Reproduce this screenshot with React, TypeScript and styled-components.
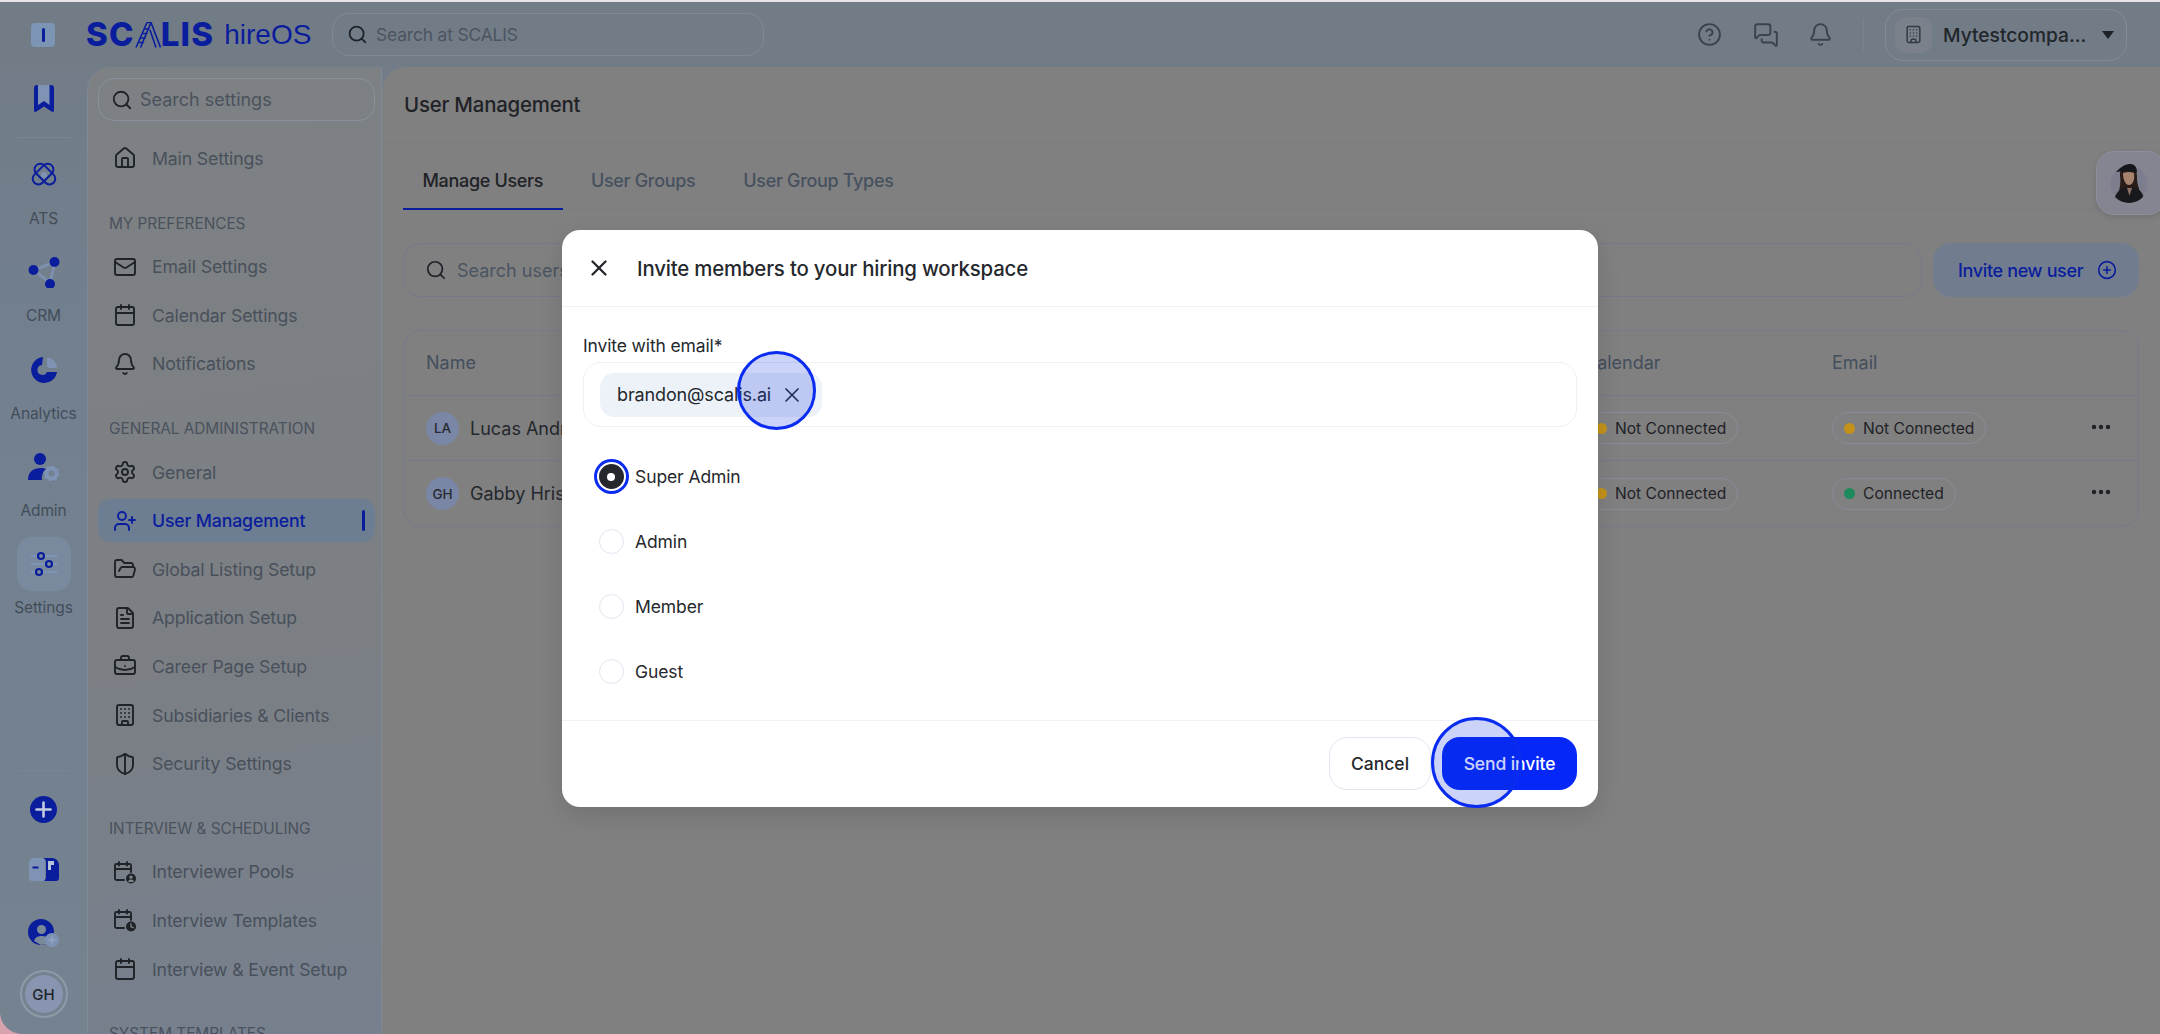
import React from 'react';
import styled, { createGlobalStyle } from 'styled-components';
import {
  Search, House, Mail, Calendar, Bell, Settings, UserPlus, FolderOpen, FileText,
  BriefcaseBusiness, Building, ShieldHalf, X, CirclePlus, CircleHelp, MessagesSquare, Ellipsis,
} from 'lucide-react';

const DEEP = '#0a1d9c';
const SOFT = '#7f93b4';

const Global = createGlobalStyle`
  html, body { margin: 0; padding: 0; width: 2160px; height: 1034px; overflow: hidden; }
  body { background: linear-gradient(180deg, #e9e2e8 0%, #e2c4cc 60%, #d7a2ae 100%); font-family: "Inter", "Noto Sans", sans-serif; }
  * { box-sizing: border-box; }
`;

const Frame = styled.div`
  position: relative;
  margin-top: 2px;
  height: 1032px;
  width: 2160px;
  display: grid;
  grid-template-rows: 65px 1fr;
  grid-template-columns: 87px 295px 1fr;
  background: linear-gradient(180deg, #727c87 0%, #728090 40%, #75828f 100%);
  border-bottom-left-radius: 22px;
  overflow: hidden;
`;

/* ---------- top bar ---------- */
const TopBar = styled.header`
  grid-column: 1 / -1;
  display: flex;
  align-items: center;
  padding-left: 31px;
  padding-right: 33px;
  background: #727c87;
`;
const ToggleBox = styled.div`
  width: 24px;
  height: 24px;
  border-radius: 4px;
  background: #7d95b5;
  display: flex;
  align-items: center;
  justify-content: center;
  &::after { content: ''; width: 3px; height: 14px; border-radius: 2px; background: ${DEEP}; }
`;
const Logo = styled.div`
  margin-left: 31px;
  display: flex;
  align-items: center;
  color: ${DEEP};
  line-height: 1;
  width: 246px;
`;
const LogoWord = styled.span`
  font-family: "Inter", sans-serif;
  font-weight: 800;
  font-size: 33px;
  letter-spacing: 1.2px;
`;
const LogoProduct = styled.span`
  margin-left: 10px;
  font-family: "Liberation Sans", sans-serif;
  font-weight: 400;
  font-size: 28px;
`;
const GlobalSearch = styled.div`
  width: 432px;
  height: 43px;
  border: 1px solid #808a96;
  border-radius: 17px;
  display: flex;
  align-items: center;
  gap: 8px;
  padding-left: 14px;
  color: #4c555f;
  font-size: 17.5px;
  letter-spacing: -0.2px;
  & svg { color: #1f2328; }
`;
const TopRight = styled.div`
  margin-left: auto;
  display: flex;
  align-items: center;
  color: #3b424c;
`;
const TopIcon = styled.div`
  display: flex;
  width: 26px;
  justify-content: center;
  margin-right: ${p => p.$mr}px;
`;
const TopDivider = styled.div`
  width: 1px;
  height: 32px;
  background: #79838f;
  margin-right: 21px;
`;
const CompanyBox = styled.div`
  width: 242px;
  height: 52px;
  border: 1px solid #828c98;
  border-radius: 18px;
  display: flex;
  align-items: center;
  padding-left: 9px;
  color: #22262b;
  font-size: 19.2px;
  font-weight: 500;
`;
const CompanyIcon = styled.div`
  width: 37px;
  height: 36px;
  border-radius: 10px;
  background: #7a818a;
  display: flex;
  align-items: center;
  justify-content: center;
  margin-right: 11px;
  color: #333a43;
`;
const Caret = styled.span`
  margin-left: 16px;
  width: 0;
  height: 0;
  border-left: 6.5px solid transparent;
  border-right: 6.5px solid transparent;
  border-top: 8px solid #1e2126;
`;

/* ---------- rail ---------- */
const Rail = styled.nav`
  display: flex;
  flex-direction: column;
  align-items: center;
  padding-top: 18px;
  padding-bottom: 16px;
`;
const RailDivider = styled.div`
  width: 54px;
  height: 1px;
  background: #788796;
  flex: none;
  margin: ${p => p.$m};
`;
const RailItems = styled.div`
  display: flex;
  flex-direction: column;
  gap: 16.3px;
`;
const RailItem = styled.div`
  display: flex;
  flex-direction: column;
  align-items: center;
  width: 87px;
`;
const RailIconBox = styled.div`
  width: 54px;
  height: 54px;
  border-radius: 15px;
  display: flex;
  align-items: center;
  justify-content: center;
  background: ${p => (p.$active ? '#798a9e' : 'transparent')};
`;
const RailLabel = styled.div`
  margin-top: 7px;
  height: 20px;
  line-height: 20px;
  font-size: 15.5px;
  color: #434d58;
  letter-spacing: -0.1px;
`;
const RailBottomIcon = styled.div`
  height: ${p => p.$h}px;
  flex: none;
  display: flex;
  align-items: center;
  justify-content: center;
`;
const Avatar = styled.div`
  margin-top: 3px;
  width: 48px;
  height: 48px;
  flex: none;
  border-radius: 50%;
  border: 2px solid #8f9aa9;
  display: flex;
  align-items: center;
  justify-content: center;
`;
const AvatarInner = styled.div`
  width: 38px;
  height: 38px;
  border-radius: 50%;
  background: #8894b0;
  color: #20242a;
  font-size: 15px;
  font-weight: 500;
  display: flex;
  align-items: center;
  justify-content: center;
`;

/* ---------- settings sidebar ---------- */
const Sidebar = styled.aside`
  background: linear-gradient(172deg, #7e8184 0%, #7c7f83 55%, #76808e 100%);
  border-top-left-radius: 24px;
  border-left: 1px solid #7f8a97;
  border-right: 1px solid #7f8a99;
  padding: 11px 6px 0 10px;
  overflow: hidden;
  height: 967px;
`;
const SideSearch = styled.div`
  height: 43px;
  border: 1px solid #88919c;
  border-radius: 16px;
  display: flex;
  align-items: center;
  padding-left: 12px;
  gap: 7px;
  color: #4a525d;
  font-size: 18px;
  margin-bottom: 13px;
  & svg { color: #1f2328; }
`;
const Group = styled.div`
  margin-top: 31px;
`;
const GroupTitle = styled.div`
  height: 20px;
  line-height: 20px;
  margin-bottom: 8.7px;
  padding-left: 11px;
  font-size: 15.4px;
  color: #4a525d;
  white-space: nowrap;
  letter-spacing: -0.05px;
`;
const NavRow = styled.div`
  position: relative;
  height: 48.6px;
  display: flex;
  align-items: center;
  padding-left: 15px;
  gap: 15px;
  font-size: 17.7px;
  letter-spacing: -0.15px;
  color: #48505b;
  & > svg { color: #1f2328; flex: none; }
`;
const ActiveRow = styled(NavRow)`
  height: 43px;
  margin: 2.8px 0;
  background: #6d7d92;
  border-radius: 13px;
  color: ${DEEP};
  font-weight: 500;
  & > svg { color: ${DEEP}; }
  &::after {
    content: '';
    position: absolute;
    right: 10px;
    top: 11px;
    width: 3px;
    height: 21px;
    border-radius: 2px;
    background: ${DEEP};
  }
`;

/* ---------- main ---------- */
const Main = styled.main`
  background: #808080;
  border-top-left-radius: 24px;
  height: 967px;
  overflow: hidden;
`;
const TitleBar = styled.div`
  height: 76px;
  padding-left: 22px;
  display: flex;
  align-items: center;
  border-bottom: 1px solid #797c80;
  font-size: 20.4px;
  font-weight: 450;
  letter-spacing: -0.2px;
  color: #1f2227;
`;
const TabBar = styled.div`
  height: 67px;
  margin-left: 21px;
  display: flex;
  gap: 9px;
  border-bottom: 1px solid #787c84;
`;
const Tab = styled.div`
  height: 67px;
  padding: 9px 19.5px 0;
  display: flex;
  align-items: center;
  font-size: 18px;
  letter-spacing: -0.33px;
  font-weight: ${p => (p.$active ? 500 : 450)};
  color: ${p => (p.$active ? '#1f2227' : '#46515f')};
  border-bottom: ${p => (p.$active ? `2px solid ${DEEP}` : '2px solid transparent')};
`;
const SearchRow = styled.div`
  margin: 33px 21px 0;
  display: flex;
  gap: 11px;
  height: 54px;
`;
const UserSearch = styled.div`
  flex: 1;
  border: 1px solid #747a8a;
  border-radius: 18px;
  display: flex;
  align-items: center;
  padding-left: 21px;
  gap: 10px;
  color: #4a5562;
  font-size: 18px;
  & svg { color: #1f2328; }
`;
const InviteButton = styled.div`
  width: 206px;
  background: #717d8f;
  border-radius: 18px;
  display: flex;
  align-items: center;
  padding-left: 25px;
  gap: 14px;
  color: ${DEEP};
  font-size: 18px;
  font-weight: 500;
  letter-spacing: -0.35px;
`;
const Table = styled.div`
  margin: 33px 21px 0;
  border: 1px solid #757a8d;
  border-radius: 18px;
`;
const TableRow = styled.div`
  display: grid;
  grid-template-columns: 1fr 248px 249px 57px;
  align-items: center;
  height: 65px;
  padding-left: 22px;
  padding-bottom: ${p => (p.$head ? 2 : 0)}px;
  border-bottom: ${p => (p.$last ? 'none' : '1px solid #767a88')};
`;
const HeadCell = styled.div`
  font-size: 18px;
  color: #434e5c;
`;
const NameCell = styled.div`
  display: flex;
  align-items: center;
  gap: 11px;
  font-size: 18px;
  color: #24282e;
`;
const Initials = styled.div`
  width: 33px;
  height: 33px;
  border-radius: 50%;
  background: #7a86a5;
  color: #262a31;
  font-size: 13.5px;
  font-weight: 500;
  display: flex;
  align-items: center;
  justify-content: center;
`;
const Pill = styled.div`
  height: 32px;
  width: fit-content;
  border: 1px solid #858b97;
  border-radius: 16px;
  display: flex;
  align-items: center;
  gap: 6px;
  padding: 0 11px;
  font-size: 15.6px;
  color: #1f2227;
`;
const Dot = styled.span`
  width: 11px;
  height: 11px;
  border-radius: 50%;
  background: ${p => (p.$ok ? '#1d8a5c' : '#c4921a')};
  margin-right: 2px;
`;
const Dots = styled.div`
  display: flex;
  padding-left: 8px;
  margin-top: -3px;
  color: #1e2126;
`;
const Floater = styled.div`
  position: absolute;
  left: 2096px;
  top: 149px;
  width: 70px;
  height: 64px;
  background: #848591;
  border: 1px solid #8d8f9d;
  border-radius: 18px;
  box-shadow: 0 2px 6px rgba(0,0,0,.12);
  padding: 12px 0 0 13px;
`;

/* ---------- modal ---------- */
const Backdrop = styled.div`
  position: absolute;
  inset: 0;
  padding-top: 1px;
  display: flex;
  align-items: center;
  justify-content: center;
`;
const Modal = styled.section`
  position: relative;
  width: 1036px;
  height: 577px;
  background: #fff;
  border-radius: 18px;
  box-shadow: 0 8px 24px rgba(0,0,0,.12);
  color: #25282d;
`;
const ModalHead = styled.div`
  height: 77px;
  display: flex;
  align-items: center;
  gap: 25px;
  padding-left: 24px;
  border-bottom: 1px solid #eef2f8;
  font-size: 20.4px;
  font-weight: 450;
  letter-spacing: -0.18px;
`;
const ModalBody = styled.div`
  padding: 28px 21px 0;
  height: 414px;
  border-bottom: 1px solid #eef2f8;
`;
const FieldLabel = styled.div`
  height: 22px;
  line-height: 22px;
  font-size: 17.5px;
  letter-spacing: -0.13px;
`;
const EmailField = styled.div`
  margin-top: 5px;
  height: 65px;
  border: 1px solid #eef1f7;
  border-radius: 18px;
  display: flex;
  align-items: center;
  padding-left: 16px;
`;
const Chip = styled.div`
  height: 44px;
  border-radius: 14px;
  background: #edf2f9;
  display: flex;
  align-items: center;
  padding: 0 18px 0 17px;
  gap: 9px;
  font-size: 18px;
  letter-spacing: -0.13px;
  & svg { color: #2b2f36; }
`;
const RadioList = styled.div`
  margin-top: 17.6px;
`;
const RadioRow = styled.div`
  height: 64.7px;
  padding-left: 15.5px;
  display: flex;
  align-items: center;
  gap: 11.5px;
  font-size: 17.5px;
  letter-spacing: -0.1px;
`;
const Radio = styled.span`
  position: relative;
  width: 25px;
  height: 25px;
  border-radius: 50%;
  border: ${p => (p.$on ? 'none' : '1px solid #dfe6ef')};
  background: ${p => (p.$on ? '#25282d' : '#fff')};
  box-shadow: ${p => (p.$on ? '0 0 0 2px #fff, 0 0 0 5px #0a2bf0' : 'none')};
  display: flex;
  align-items: center;
  justify-content: center;
  &::after {
    content: '';
    display: ${p => (p.$on ? 'block' : 'none')};
    width: 8px;
    height: 8px;
    border-radius: 50%;
    background: #fff;
  }
`;
const ModalFoot = styled.div`
  height: 86px;
  display: flex;
  align-items: center;
  justify-content: flex-end;
  gap: 11px;
  padding: 0 21px 1px 0;
`;
const Cancel = styled.div`
  width: 102px;
  height: 53px;
  border: 1px solid #dfe6ef;
  border-radius: 18px;
  display: flex;
  align-items: center;
  justify-content: center;
  font-size: 17.5px;
  font-weight: 450;
`;
const Send = styled.div`
  width: 135px;
  height: 53px;
  border-radius: 18px;
  background: #0527f7;
  color: #fff;
  display: flex;
  align-items: center;
  justify-content: center;
  font-size: 17.5px;
  font-weight: 450;
  letter-spacing: -0.1px;
`;
const ClickMark = styled.div`
  position: absolute;
  left: ${p => p.$x}px;
  top: ${p => p.$y}px;
  width: ${p => p.$d}px;
  height: ${p => p.$d}px;
  border-radius: 50%;
  border: 3px solid #0a2bf0;
  background: rgba(20, 55, 225, 0.22);
`;

/* ---------- drawn icons ---------- */
const LadderA = () => (
  <svg width="26" height="26" viewBox="0 0 26 26" fill="none" stroke={DEEP} strokeWidth="1.6" role="img" aria-label="A">
    <path d="M12 0.5 L1 25.5 M16 0.5 L5.5 25.5" />
    <path d="M12 0.5 H16 L25.5 25.5 M15 8 L21 25.5" />
    <path d="M9.5 7 H14.5 M7.5 11.5 H12.5 M5.5 16 H10.5 M3.5 20.5 H8.5" />
  </svg>
);
const BookmarkMark = () => (
  <svg width="20" height="27" viewBox="0 0 20 27" fill="none">
    <path d="M3 0 H17 A3 3 0 0 1 20 3 V25.5 C20 27 19 27.3 17.5 26.5 L10 21.5 L2.5 26.5 C1 27.3 0 27 0 25.5 V3 A3 3 0 0 1 3 0 Z" fill={DEEP} />
    <path d="M4 0 H15.5 V20 L10 16 L4 20 Z" fill={SOFT} />
  </svg>
);
const AtomIcon = () => (
  <svg width="28" height="28" viewBox="0 0 28 28" fill="none" stroke={DEEP} strokeWidth="2.4">
    <circle cx="14" cy="14" r="3" fill={SOFT} stroke="none" />
    <rect x="-1" y="7" width="30" height="14" rx="7" transform="rotate(45 14 14) translate(2.5 1.2) scale(.82)" />
    <rect x="-1" y="7" width="30" height="14" rx="7" transform="rotate(-45 14 14) translate(2.5 1.2) scale(.82)" />
  </svg>
);
const CrmIcon = () => (
  <svg width="32" height="32" viewBox="0 0 32 32" fill="none">
    <path d="M6 14 L27 6 L22 27 Z" stroke={SOFT} strokeWidth="3" strokeLinejoin="round" opacity=".8" />
    <circle cx="5.5" cy="14" r="5" fill={DEEP} />
    <circle cx="26.5" cy="6" r="5" fill={DEEP} />
    <circle cx="22" cy="28" r="5" fill={DEEP} />
  </svg>
);
const PieIcon = () => (
  <svg width="28" height="28" viewBox="0 0 28 28">
    <path d="M13 1 A13 13 0 1 0 27 16 H17 A5 5 0 1 1 12 9 Z" fill={DEEP} />
    <path d="M17 1.5 A11 11 0 0 1 27 12 H18.5 A5 5 0 0 0 17 10 Z" fill={SOFT} />
  </svg>
);
const AdminIcon = () => (
  <svg width="31" height="28" viewBox="0 0 31 28">
    <circle cx="12" cy="6" r="6" fill={DEEP} />
    <path d="M0 27 C0 19 5 15 13 15 C15 15 17 15.5 18 16 C14.5 19 13.5 23 14 27 Z" fill={DEEP} />
    <circle cx="23.5" cy="20.5" r="5" fill="none" stroke={SOFT} strokeWidth="4" />
    <circle cx="23.5" cy="20.5" r="7" fill="none" stroke={SOFT} strokeWidth="2" strokeDasharray="2.6 2.9" />
  </svg>
);
const SlidersIcon = () => (
  <svg width="28" height="26" viewBox="0 0 28 26" fill="none">
    <path d="M1 5 H27 M1 13 H27 M1 21 H27" stroke={SOFT} strokeWidth="2" />
    <circle cx="11" cy="5" r="3" fill="#798a9e" stroke={DEEP} strokeWidth="2.2" />
    <circle cx="19" cy="13" r="3" fill="#798a9e" stroke={DEEP} strokeWidth="2.2" />
    <circle cx="9" cy="21" r="3" fill="#798a9e" stroke={DEEP} strokeWidth="2.2" />
  </svg>
);
const PlusDisc = () => (
  <svg width="27" height="27" viewBox="0 0 27 27">
    <circle cx="13.5" cy="13.5" r="13.5" fill={DEEP} />
    <path d="M13.5 6.5 V20.5 M6.5 13.5 H20.5" stroke="#c3cde2" strokeWidth="2.6" strokeLinecap="round" />
  </svg>
);
const MailboxIcon = () => (
  <svg width="30" height="23" viewBox="0 0 30 23">
    <path d="M5 0 H16 V23 H3 A3 3 0 0 1 0 20 V5 A5 5 0 0 1 5 0 Z" fill={SOFT} />
    <path d="M14 0 H23 A7 7 0 0 1 30 7 V20 A3 3 0 0 1 27 23 H15 C17 21 17 20 17 18 V4 C17 2 16 1 14 0 Z" fill={DEEP} />
    <path d="M3.5 9.5 H9.5" stroke={DEEP} strokeWidth="2" />
    <path d="M19 3 H25 V7 H22 V12 H19 Z" fill="#b7c3da" />
  </svg>
);
const UserAddIcon = () => (
  <svg width="31" height="28" viewBox="0 0 31 28">
    <circle cx="13" cy="13" r="13" fill={DEEP} />
    <circle cx="13.5" cy="10.5" r="4.5" fill="#7a8999" />
    <path d="M6 22 C7 18 10 17 14 17 C17 17 20 18 21 20 L19 25 L13 26 Z" fill="#7a8999" />
    <circle cx="24" cy="21" r="7" fill="#7d92b3" />
    <path d="M24 17.5 V24.5 M20.5 21 H27.5" stroke="#93a5c2" strokeWidth="1.6" />
  </svg>
);
const PoolIcon = ({ clock }: { clock?: boolean }) => (
  <svg width="24" height="24" viewBox="0 0 24 24" fill="none" stroke="#1f2328" strokeWidth="1.9" strokeLinecap="round" style={{ flex: 'none' }}>
    <path d="M11 20 H3.5 A1.5 1.5 0 0 1 2 18.5 V5.5 A1.5 1.5 0 0 1 3.5 4 H16.5 A1.5 1.5 0 0 1 18 5.5 V12" />
    <path d="M6 2 V5.5 M14 2 V5.5 M2 9 H18" />
    <circle cx="18" cy="18.5" r="5" fill="#1f2328" stroke="none" />
    {clock
      ? <path d="M18 15.8 V18.7 L20.2 19.6" stroke="#80858a" strokeWidth="1.3" />
      : <g stroke="none" fill="#80858a"><circle cx="18" cy="17.2" r="1.6" /><path d="M15.2 22 C15.4 20 16.5 19.4 18 19.4 C19.5 19.4 20.6 20 20.8 22 Z" /></g>}
  </svg>
);
const WomanPhoto = () => (
  <svg width="38" height="40" viewBox="0 0 38 40">
    <defs>
      <clipPath id="womanClip"><path d="M0 0 H38 V20 A19 19 0 0 1 0 20 Z" /></clipPath>
    </defs>
    <circle cx="19" cy="20" r="18.5" fill="#7c7e8e" />
    <g clipPath="url(#womanClip)">
      <path d="M10 11 C10 3 14 1 19 1 C25 1 27 6 27 13 C27 20 29 24 30 28 L8 30 C10 24 11 18 10 11 Z" fill="#2a1d19" />
      <path d="M6 8 C10 4 13 1 19 0 C25 -0.5 27 4 27 8 C20 6.5 13 7 6 8 Z" fill="#14171b" />
      <path d="M13 9 C17 7.5 21 7.5 24 9 C25 15 23 21 19 21 C15 21 13 15 13 9 Z" fill="#a5836f" />
      <path d="M4 40 C4 29 10 24 17 24 H22 C29 24 33 28 34 36 C30 40 26 41 19 41 C12 41 8 41 4 40 Z" fill="#17191c" />
      <path d="M17 24 L19.5 32 L22 24 Z" fill="#8b6f60" />
    </g>
  </svg>
);

const icon = (C: any, size = 24, sw = 1.9) => <C size={size} strokeWidth={sw} />;

const prefs: [string, any][] = [
  ['Email Settings', icon(Mail)],
  ['Calendar Settings', icon(Calendar)],
  ['Notifications', icon(Bell)],
];
const adminBefore: [string, any][] = [['General', icon(Settings)]];
const adminAfter: [string, any][] = [
  ['Global Listing Setup', icon(FolderOpen)],
  ['Application Setup', icon(FileText)],
  ['Career Page Setup', icon(BriefcaseBusiness)],
  ['Subsidiaries & Clients', icon(Building)],
  ['Security Settings', icon(ShieldHalf)],
];
const interview: [string, any][] = [
  ['Interviewer Pools', <PoolIcon />],
  ['Interview Templates', <PoolIcon clock />],
  ['Interview & Event Setup', icon(Calendar)],
];
const railItems: [string, any, boolean?][] = [
  ['ATS', <AtomIcon />],
  ['CRM', <CrmIcon />],
  ['Analytics', <PieIcon />],
  ['Admin', <AdminIcon />],
  ['Settings', <SlidersIcon />, true],
];
const users = [
  { ini: 'LA', name: 'Lucas Andrews', ok: false },
  { ini: 'GH', name: 'Gabby Hristova', ok: true },
];

const Rows = ({ list }: { list: [string, any][] }) => (
  <>
    {list.map(([t, i]) => (
      <NavRow key={t}>{i}{t}</NavRow>
    ))}
  </>
);

export default function App() {
  return (
    <>
      <Global />
      <Frame>
        <TopBar>
          <ToggleBox />
          <Logo>
            <LogoWord>SC</LogoWord>
            <LadderA />
            <LogoWord>LIS</LogoWord>
            <LogoProduct>hireOS</LogoProduct>
          </Logo>
          <GlobalSearch>
            <Search size={21} strokeWidth={2} />
            Search at SCALIS
          </GlobalSearch>
          <TopRight>
            <TopIcon $mr={31}><CircleHelp size={25} strokeWidth={1.8} /></TopIcon>
            <TopIcon $mr={28}><MessagesSquare size={26} strokeWidth={1.8} /></TopIcon>
            <TopIcon $mr={30}><Bell size={25} strokeWidth={1.8} /></TopIcon>
            <TopDivider />
            <CompanyBox>
              <CompanyIcon><Building size={19} strokeWidth={1.9} /></CompanyIcon>
              Mytestcompa...
              <Caret />
            </CompanyBox>
          </TopRight>
        </TopBar>

        <Rail>
          <BookmarkMark />
          <RailDivider $m="25px 0 10px" />
          <RailItems>
            {railItems.map(([label, ic, active]) => (
              <RailItem key={label}>
                <RailIconBox $active={active}>{ic}</RailIconBox>
                <RailLabel>{label}</RailLabel>
              </RailItem>
            ))}
          </RailItems>
          <RailDivider $m="auto 0 8px" />
          <RailBottomIcon $h={60}><PlusDisc /></RailBottomIcon>
          <RailBottomIcon $h={60}><MailboxIcon /></RailBottomIcon>
          <RailBottomIcon $h={68}><UserAddIcon /></RailBottomIcon>
          <Avatar><AvatarInner>GH</AvatarInner></Avatar>
        </Rail>

        <Sidebar>
          <SideSearch><Search size={22} strokeWidth={2} />Search settings</SideSearch>
          <NavRow>{icon(House)}Main Settings</NavRow>
          <Group>
            <GroupTitle>MY PREFERENCES</GroupTitle>
            <Rows list={prefs} />
          </Group>
          <Group>
            <GroupTitle>GENERAL ADMINISTRATION</GroupTitle>
            <Rows list={adminBefore} />
            <ActiveRow>{icon(UserPlus)}User Management</ActiveRow>
            <Rows list={adminAfter} />
          </Group>
          <Group>
            <GroupTitle>INTERVIEW &amp; SCHEDULING</GroupTitle>
            <Rows list={interview} />
          </Group>
          <Group>
            <GroupTitle>SYSTEM TEMPLATES</GroupTitle>
          </Group>
        </Sidebar>

        <Main>
          <TitleBar>User Management</TitleBar>
          <TabBar>
            <Tab $active>Manage Users</Tab>
            <Tab>User Groups</Tab>
            <Tab>User Group Types</Tab>
          </TabBar>
          <SearchRow>
            <UserSearch><Search size={22} strokeWidth={1.9} />Search users</UserSearch>
            <InviteButton>Invite new user<CirclePlus size={20} strokeWidth={1.9} /></InviteButton>
          </SearchRow>
          <Table>
            <TableRow $head>
              <HeadCell>Name</HeadCell>
              <HeadCell>Calendar</HeadCell>
              <HeadCell>Email</HeadCell>
            </TableRow>
            {users.map((u, i) => (
              <TableRow key={u.ini} $last={i === users.length - 1}>
                <NameCell><Initials>{u.ini}</Initials>{u.name}</NameCell>
                <Pill><Dot />Not Connected</Pill>
                <Pill><Dot $ok={u.ok} />{u.ok ? 'Connected' : 'Not Connected'}</Pill>
                <Dots><Ellipsis size={24} strokeWidth={2.4} /></Dots>
              </TableRow>
            ))}
          </Table>
        </Main>

        <Floater><WomanPhoto /></Floater>

        <Backdrop>
          <Modal>
            <ModalHead>
              <X size={26} strokeWidth={2.2} />
              Invite members to your hiring workspace
            </ModalHead>
            <ModalBody>
              <FieldLabel>Invite with email*</FieldLabel>
              <EmailField>
                <Chip>brandon@scalis.ai<X size={24} strokeWidth={1.7} /></Chip>
              </EmailField>
              <RadioList>
                <RadioRow><Radio $on />Super Admin</RadioRow>
                <RadioRow><Radio />Admin</RadioRow>
                <RadioRow><Radio />Member</RadioRow>
                <RadioRow><Radio />Guest</RadioRow>
              </RadioList>
            </ModalBody>
            <ModalFoot>
              <Cancel>Cancel</Cancel>
              <Send>Send invite</Send>
            </ModalFoot>
            <ClickMark $x={175} $y={121} $d={79} />
            <ClickMark $x={868.5} $y={486.5} $d={91} />
          </Modal>
        </Backdrop>
      </Frame>
    </>
  );
}
